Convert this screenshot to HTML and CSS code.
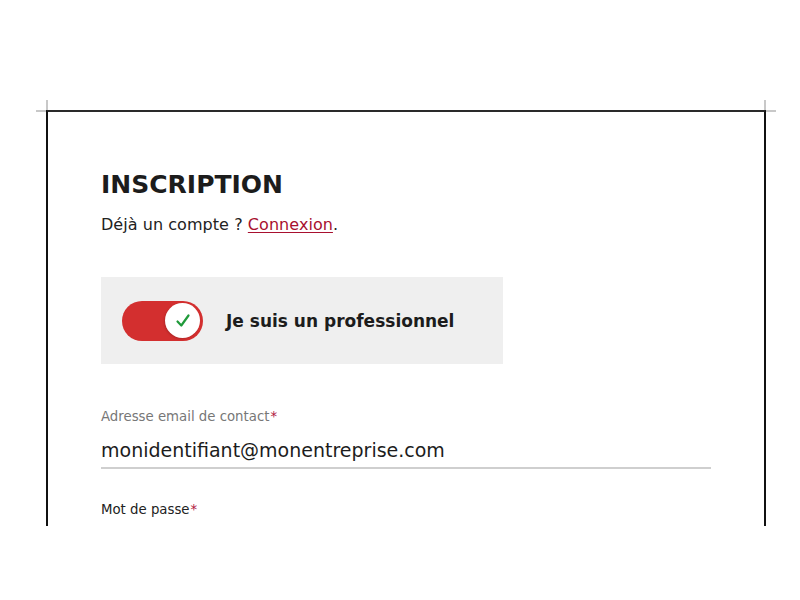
FILE: index.html
```html
<!DOCTYPE html>
<html lang="fr">
<head>
<meta charset="utf-8">
<title>Inscription</title>
<link rel="stylesheet" href="styles.css">
</head>
<body>
<div class="sheet">
  <span class="mark mark-tl-h"></span>
  <span class="mark mark-tl-v"></span>
  <span class="mark mark-tr-h"></span>
  <span class="mark mark-tr-v"></span>
  <div class="content">
    <h1 class="title">INSCRIPTION</h1>
    <p class="login">Déjà un compte ? <a href="#" class="login-link">Connexion</a>.</p>
    <div class="pro-box">
      <span class="toggle">
        <span class="knob">
          <svg width="20" height="20" viewBox="0 0 20 20"><path d="M4.5 10.5 L8.3 14.5 L15.5 4.5" fill="none" stroke="#1f9a3a" stroke-width="2.2" stroke-linecap="round" stroke-linejoin="round"/></svg>
        </span>
      </span>
      <span class="pro-label">Je suis un professionnel</span>
    </div>
    <div class="field">
      <label class="field-label muted">Adresse email de contact<span class="req">*</span></label>
      <div class="field-value">monidentifiant@monentreprise.com</div>
    </div>
    <div class="field field-pass">
      <label class="field-label">Mot de passe<span class="req">*</span></label>
    </div>
  </div>
</div>
</body>
</html>
```
FILE: styles.css
```css
html, body {
  margin: 0;
  padding: 0;
  background: #fff;
}
body {
  font-family: "DejaVu Sans", "Open Sans", sans-serif;
  color: #222;
  width: 800px;
  height: 600px;
  overflow: hidden;
}
.sheet {
  position: relative;
  margin: 110px 0 0 46px;
  width: 716px;
  height: 414px;
  border-top: 2px solid #2a2a2a;
  border-left: 2px solid #111;
  border-right: 2px solid #111;
}
.mark {
  position: absolute;
  background: #c8c8c8;
}
.mark-tl-h { left: -12px; top: -2px; width: 10px; height: 2px; }
.mark-tl-v { left: -2px; top: -12px; width: 2px; height: 10px; }
.mark-tr-h { right: -12px; top: -2px; width: 10px; height: 2px; }
.mark-tr-v { right: -2px; top: -12px; width: 2px; height: 10px; }
.content {
  padding: 57px 52px 0 53px;
}
.title {
  margin: 0;
  font-size: 25px;
  line-height: 32px;
  font-weight: 700;
  color: #1c1c1c;
}
.login {
  margin: 14px 0 0;
  font-size: 16px;
  line-height: 20px;
  color: #222;
  letter-spacing: 0.05px;
}
.login-link {
  color: #a8102f;
  text-decoration: underline;
  text-underline-offset: 2px;
}
.pro-box {
  margin-top: 42px;
  width: 402px;
  height: 87px;
  background: #efefef;
  display: flex;
  align-items: center;
  box-sizing: border-box;
  padding-left: 21px;
  gap: 23px;
}
.toggle {
  width: 81px;
  height: 40px;
  border-radius: 20px;
  background: #d32f2f;
  display: flex;
  align-items: center;
  justify-content: flex-end;
  padding-right: 3px;
  box-sizing: border-box;
}
.knob {
  width: 35px;
  height: 35px;
  border-radius: 50%;
  background: #fff;
  display: flex;
  align-items: center;
  justify-content: center;
  box-shadow: -1px 1px 2px rgba(0, 0, 0, 0.15);
}
.pro-label {
  font-size: 17px;
  font-weight: 700;
  color: #1c1c1c;
}
.field {
  margin-top: 44px;
  width: 610px;
}
.field-label {
  display: block;
  font-size: 13.3px;
  line-height: 18px;
  color: #222;
}
.field-label.muted {
  color: #777;
}
.req {
  color: #b0143c;
  margin-left: 1px;
}
.field-value {
  margin-top: 11px;
  font-size: 19px;
  line-height: 26px;
  color: #1c1c1c;
  padding-bottom: 4px;
  border-bottom: 2px solid #cfcfcf;
}
.field-pass {
  margin-top: 32px;
}
```
